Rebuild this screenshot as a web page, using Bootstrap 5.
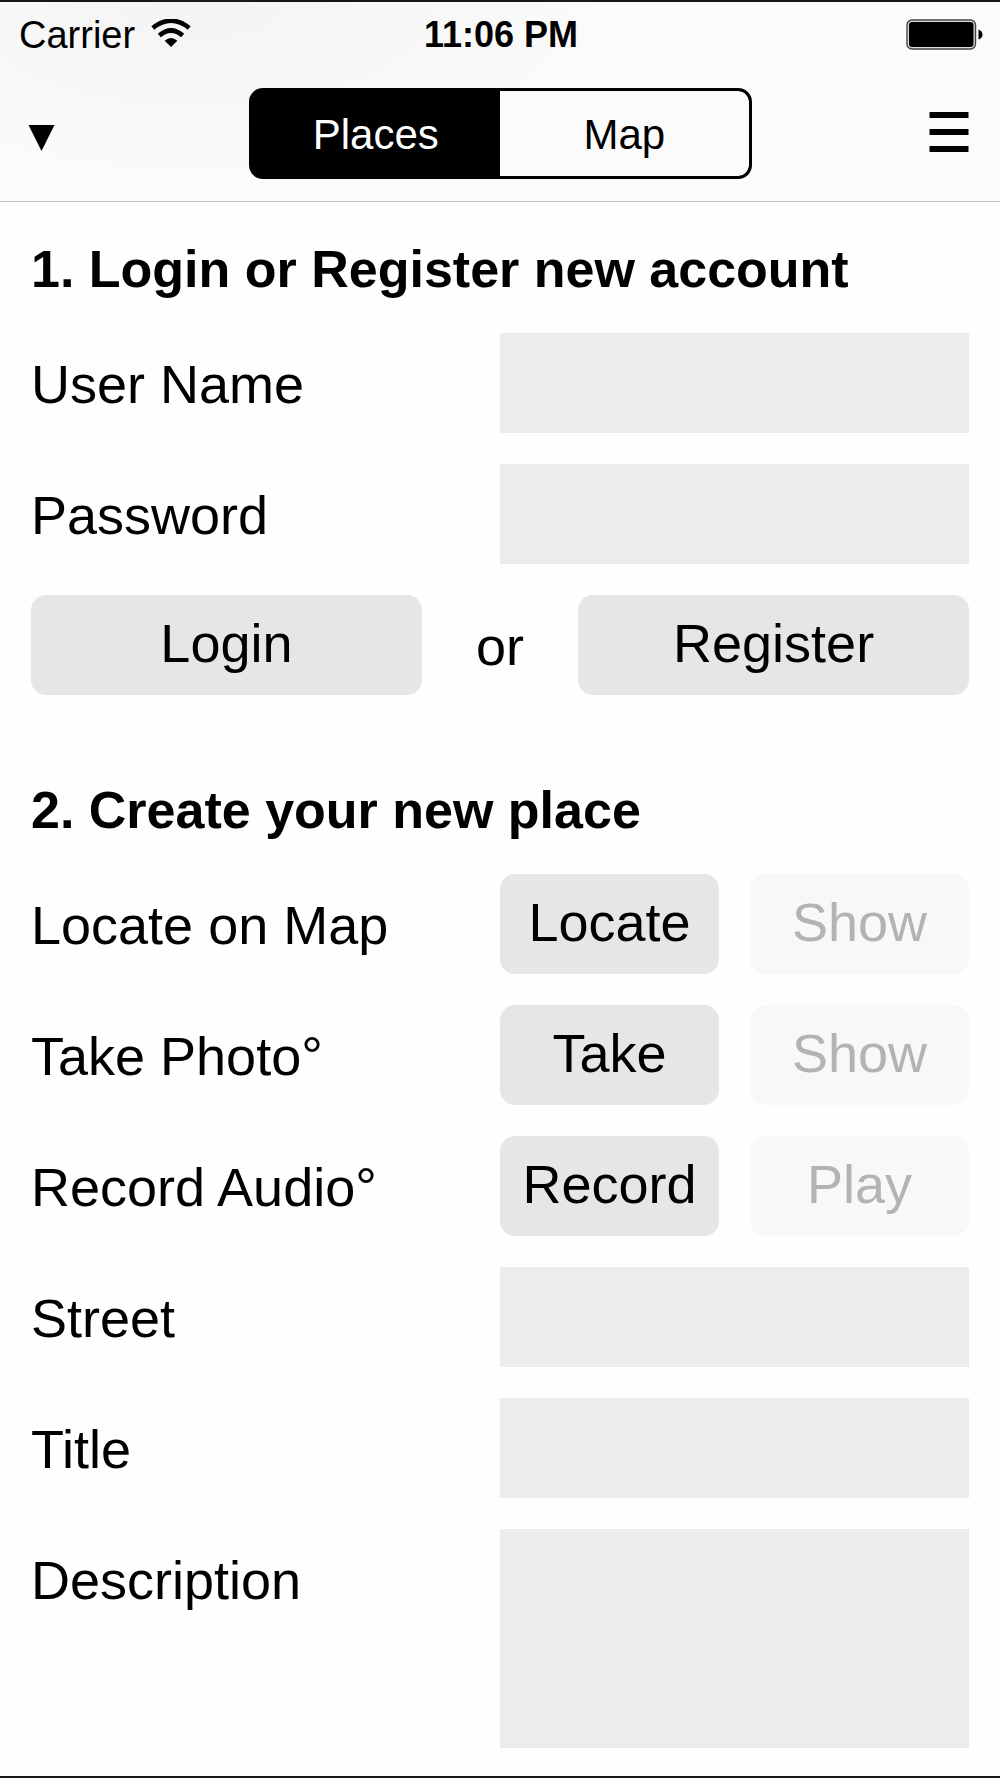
<!DOCTYPE html>
<html lang="en">
<head>
<meta charset="utf-8">
<meta name="viewport" content="width=device-width, initial-scale=1">
<title>Places</title>
<link href="https://cdn.jsdelivr.net/npm/bootstrap@5.3.0/dist/css/bootstrap.min.css" rel="stylesheet">
<style>
  body {
    font-family: "Liberation Sans", Arial, sans-serif;
    font-size: 54px;
    line-height: 60px;
    color: #000;
    background: #fefefe;
    border-top: 2px solid #1a1718;
    border-bottom: 2px solid #1a1718;
  }
  svg { display: block; }

  /* Top bar */
  .top-bar {
    background: radial-gradient(ellipse 420px 190px at 200px 0, #f4f4f4, #f8f8f8 60%, #fbfbfb) #fbfbfb;
    border-bottom: 1px solid #bcbcbc;
  }
  .status-line { height: 64px; padding: 0 17px 0 19px; font-size: 38px; line-height: 46px; }
  .status-line span, .status-time { padding-top: 2px; }
  .status-time { font-size: 36px; }
  .nav-line { height: 135px; padding: 0 28px; }
  .icon-btn { display: block; background: none; border: 0; padding: 0; }
  .side { flex: 1 1 0; }
  .segments { flex: 0 1 503px; border: 3px solid #000; border-radius: 14px; overflow: hidden; background: #000; }
  .segments .btn {
    height: 85px;
    padding: 0;
    border: 0;
    border-radius: 0;
    font-size: 42px;
    line-height: 87px;
    flex: 1 1 0;
    color: #000;
    background: #fbfbfb;
  }
  .segments .btn:last-child { border-radius: 0 11px 11px 0; }
  .segments .btn-check:checked + .btn { background: #000; color: #fff; }

  /* Form */
  .form-area { padding: 0 31px 28px; }
  .section-title { font-size: 52px; line-height: 60px; font-weight: 700; height: 131px; padding-top: 37px; margin: 0; }
  .stack { display: flex; flex-direction: column; gap: 31px; }
  .field-label { line-height: 100px; padding-top: 1px; height: 100px; display: block; }
  .field-box {
    display: block;
    width: 100%;
    height: 100px;
    background: #ececec;
    border: 0;
    border-radius: 0;
    padding: 0 16px;
    resize: none;
  }
  textarea.field-box { height: 219px; padding: 16px; }
  .pad-btn, .pad-btn:disabled {
    height: 100px;
    padding: 0 0 3px;
    border: 0;
    border-radius: 15px;
    font-size: 54px;
    line-height: 97px;
    color: #000;
    background: #e6e6e6;
    width: 100%;
  }
  .pad-btn:disabled { color: #b3b3b3; background: #f8f8f8; opacity: 1; }
  .pair { display: flex; gap: 31px; }
  .pair > .btn { flex: 1 1 0; }
  .second { padding-top: 48px; }
</style>
</head>
<body>
<header class="top-bar">
  <div class="status-line d-flex align-items-center">
    <div class="side d-flex align-items-center">
      <span>Carrier</span>
      <svg class="ms-3" width="40" height="30" viewBox="0 0 40 30" aria-hidden="true">
        <path d="M1.800 9Q20-5.500 38.200 9" fill="none" stroke="#000" stroke-width="4.600"/>
        <path d="M8.300 16.500Q20 6.500 31.700 16.500" fill="none" stroke="#000" stroke-width="4.600"/>
        <path d="M13.700 21.700Q20 16.500 26.300 21.700L20 28Z"/>
      </svg>
    </div>
    <strong class="status-time">11:06 PM</strong>
    <div class="side d-flex justify-content-end">
      <svg width="77" height="31" viewBox="0 0 77 31" role="img" aria-label="Battery full">
        <rect x="1" y="1" width="68.500" height="29" rx="5" fill="#ddd" stroke="#444" stroke-width="1.400"/>
        <rect x="3" y="3" width="64.500" height="25" rx="3"/>
        <path d="M72.500 10.500Q76.500 12 76.500 15.500T72.500 20.500Z"/>
      </svg>
    </div>
  </div>
  <nav class="nav-line d-flex align-items-center" aria-label="Views">
    <div class="side">
      <button class="icon-btn" type="button" aria-label="Expand">
        <svg width="27" height="34" viewBox="0 0 27 34"><path d="M.500 8H26.500L13.500 34Z"/></svg>
      </button>
    </div>
    <div class="segments d-flex" role="group" aria-label="View">
      <input class="btn-check" type="radio" name="view" id="view-places" checked>
      <label class="btn" for="view-places">Places</label>
      <input class="btn-check" type="radio" name="view" id="view-map">
      <label class="btn" for="view-map">Map</label>
    </div>
    <div class="side d-flex justify-content-end">
      <button class="icon-btn" type="button" aria-label="Menu">
        <svg width="43" height="43" viewBox="0 0 43 43"><path d="M.500 0H39.500V6H.500ZM.500 17H39.500V23H.500ZM.500 34H39.500V40H.500Z"/></svg>
      </button>
    </div>
  </nav>
</header>

<main class="form-area">
  <form>
    <h2 class="section-title">1. Login or Register new account</h2>
    <div class="stack">
      <div class="row g-0">
        <div class="col-6"><label class="field-label" for="user">User Name</label></div>
        <div class="col-6"><input class="field-box" type="text" id="user"></div>
      </div>
      <div class="row g-0">
        <div class="col-6"><label class="field-label" for="pass">Password</label></div>
        <div class="col-6"><input class="field-box" type="password" id="pass"></div>
      </div>
      <div class="row g-0">
        <div class="col-5"><button class="btn pad-btn" type="button">Login</button></div>
        <div class="col-2"><span class="field-label text-center">or</span></div>
        <div class="col-5"><button class="btn pad-btn" type="button">Register</button></div>
      </div>
    </div>
  </form>

  <form class="second">
    <h2 class="section-title">2. Create your new place</h2>
    <div class="stack">
      <div class="row g-0">
        <div class="col-6"><span class="field-label">Locate on Map</span></div>
        <div class="col-6 pair"><button class="btn pad-btn" type="button">Locate</button><button class="btn pad-btn" type="button" disabled>Show</button></div>
      </div>
      <div class="row g-0">
        <div class="col-6"><span class="field-label">Take Photo°</span></div>
        <div class="col-6 pair"><button class="btn pad-btn" type="button">Take</button><button class="btn pad-btn" type="button" disabled>Show</button></div>
      </div>
      <div class="row g-0">
        <div class="col-6"><span class="field-label">Record Audio°</span></div>
        <div class="col-6 pair"><button class="btn pad-btn" type="button">Record</button><button class="btn pad-btn" type="button" disabled>Play</button></div>
      </div>
      <div class="row g-0">
        <div class="col-6"><label class="field-label" for="street">Street</label></div>
        <div class="col-6"><input class="field-box" type="text" id="street"></div>
      </div>
      <div class="row g-0">
        <div class="col-6"><label class="field-label" for="title">Title</label></div>
        <div class="col-6"><input class="field-box" type="text" id="title"></div>
      </div>
      <div class="row g-0">
        <div class="col-6"><label class="field-label" for="description">Description</label></div>
        <div class="col-6"><textarea class="field-box" id="description"></textarea></div>
      </div>
    </div>
  </form>
</main>
<script src="https://cdn.jsdelivr.net/npm/bootstrap@5.3.0/dist/js/bootstrap.bundle.min.js"></script>
</body>
</html>
